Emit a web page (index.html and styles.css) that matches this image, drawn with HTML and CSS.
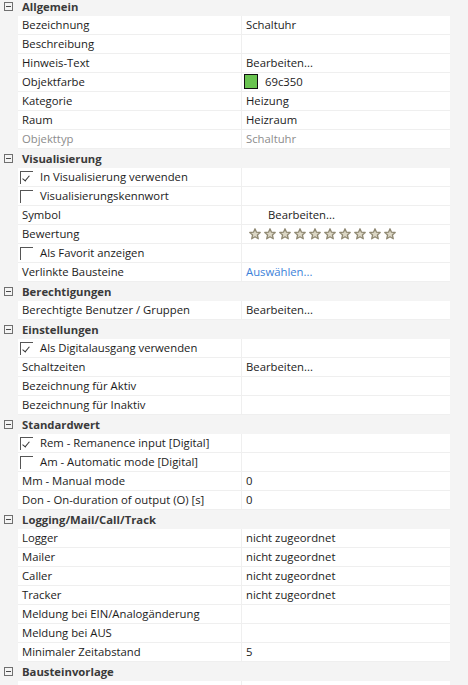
FILE: index.html
```html
<!DOCTYPE html>
<html lang="de">
<head>
<meta charset="utf-8">
<title>Eigenschaften</title>
<link rel="stylesheet" href="styles.css">
</head>
<body>
<div class="grid">
  <div class="group">
    <div class="head"><span class="toggle"></span><span class="title">Allgemein</span></div>
    <div class="row"><div class="label">Bezeichnung</div><div class="value">Schaltuhr</div></div>
    <div class="row"><div class="label">Beschreibung</div><div class="value"></div></div>
    <div class="row"><div class="label">Hinweis-Text</div><div class="value">Bearbeiten...</div></div>
    <div class="row"><div class="label">Objektfarbe</div><div class="value"><span class="swatch"></span>69c350</div></div>
    <div class="row"><div class="label">Kategorie</div><div class="value">Heizung</div></div>
    <div class="row"><div class="label">Raum</div><div class="value">Heizraum</div></div>
    <div class="row"><div class="label muted">Objekttyp</div><div class="value muted">Schaltuhr</div></div>
  </div>
  <div class="group">
    <div class="head"><span class="toggle"></span><span class="title">Visualisierung</span></div>
    <div class="row"><div class="label check"><span class="box checked"></span>In Visualisierung verwenden</div><div class="value"></div></div>
    <div class="row"><div class="label check"><span class="box"></span>Visualisierungskennwort</div><div class="value"></div></div>
    <div class="row"><div class="label">Symbol</div><div class="value indent">Bearbeiten...</div></div>
    <div class="row"><div class="label">Bewertung</div><div class="value stars" id="stars"></div></div>
    <div class="row"><div class="label check"><span class="box"></span>Als Favorit anzeigen</div><div class="value"></div></div>
    <div class="row"><div class="label">Verlinkte Bausteine</div><div class="value link">Auswählen...</div></div>
  </div>
  <div class="group">
    <div class="head"><span class="toggle"></span><span class="title">Berechtigungen</span></div>
    <div class="row"><div class="label">Berechtigte Benutzer / Gruppen</div><div class="value">Bearbeiten...</div></div>
  </div>
  <div class="group">
    <div class="head"><span class="toggle"></span><span class="title">Einstellungen</span></div>
    <div class="row"><div class="label check"><span class="box checked"></span>Als Digitalausgang verwenden</div><div class="value"></div></div>
    <div class="row"><div class="label">Schaltzeiten</div><div class="value">Bearbeiten...</div></div>
    <div class="row"><div class="label">Bezeichnung für Aktiv</div><div class="value"></div></div>
    <div class="row"><div class="label">Bezeichnung für Inaktiv</div><div class="value"></div></div>
  </div>
  <div class="group">
    <div class="head"><span class="toggle"></span><span class="title">Standardwert</span></div>
    <div class="row"><div class="label check"><span class="box checked"></span>Rem - Remanence input [Digital]</div><div class="value"></div></div>
    <div class="row"><div class="label check"><span class="box"></span>Am - Automatic mode [Digital]</div><div class="value"></div></div>
    <div class="row"><div class="label">Mm - Manual mode</div><div class="value">0</div></div>
    <div class="row"><div class="label">Don - On-duration of output (O) [s]</div><div class="value">0</div></div>
  </div>
  <div class="group">
    <div class="head"><span class="toggle"></span><span class="title">Logging/Mail/Call/Track</span></div>
    <div class="row"><div class="label">Logger</div><div class="value">nicht zugeordnet</div></div>
    <div class="row"><div class="label">Mailer</div><div class="value">nicht zugeordnet</div></div>
    <div class="row"><div class="label">Caller</div><div class="value">nicht zugeordnet</div></div>
    <div class="row"><div class="label">Tracker</div><div class="value">nicht zugeordnet</div></div>
    <div class="row"><div class="label">Meldung bei EIN/Analogänderung</div><div class="value"></div></div>
    <div class="row"><div class="label">Meldung bei AUS</div><div class="value"></div></div>
    <div class="row"><div class="label">Minimaler Zeitabstand</div><div class="value">5</div></div>
  </div>
  <div class="group">
    <div class="head"><span class="toggle"></span><span class="title">Bausteinvorlage</span></div>
    <div class="row"><div class="label"></div><div class="value"></div></div>
  </div>
</div>
<script>
  var s = document.getElementById('stars');
  var svg = '<svg class="star" viewBox="0 0 12 12" width="12" height="12"><path d="M6 0.8 L7.5 4.2 L11.2 4.5 L8.4 7 L9.3 10.8 L6 8.8 L2.7 10.8 L3.6 7 L0.8 4.5 L4.5 4.2 Z" fill="#dcd7c6" stroke="#8f8872" stroke-width="1.3" stroke-linejoin="round"/></svg>';
  var h = '';
  for (var i = 0; i < 10; i++) h += svg;
  s.innerHTML = h;
</script>
</body>
</html>
```

FILE: styles.css
```css
html, body {
  margin: 0;
  padding: 0;
  background: #f4f4f4;
}
body {
  font-family: "Open Sans", "Noto Sans", sans-serif;
  font-size: 11.3px;
  color: #1b1b1b;
  overflow: hidden;
}
.grid {
  margin-top: -3px;
  width: 468px;
}
.head {
  height: 19px;
  display: flex;
  align-items: center;
}
.toggle {
  width: 7px;
  height: 7px;
  border: 1px solid #6f6f6f;
  margin-left: 4px;
  margin-right: 9px;
  position: relative;
  flex: none;
}
.toggle::after {
  content: "";
  position: absolute;
  left: 1px;
  right: 1px;
  top: 3px;
  height: 1px;
  background: #4a4a4a;
}
.title {
  font-weight: 700;
  color: #3a3a3a;
}
.row {
  margin-left: 18px;
  width: 432px;
  height: 18px;
  border-bottom: 1px solid #efefef;
  background: #fff;
  display: grid;
  grid-template-columns: 224px 208px;
}
.label {
  padding-left: 4px;
  padding-bottom: 1px;
  border-right: 1px solid #efefef;
  display: flex;
  align-items: center;
  white-space: nowrap;
  overflow: hidden;
}
.value {
  padding-left: 4px;
  padding-bottom: 1px;
  display: flex;
  align-items: center;
  white-space: nowrap;
}
.muted {
  color: #8c8c8c;
}
.indent {
  padding-left: 26px;
}
.link {
  color: #3b7fd9;
}
.check {
  padding-left: 2px;
}
.box {
  width: 13px;
  height: 13px;
  border-left: 1px solid #555;
  border-top: 1px solid #555;
  box-sizing: border-box;
  margin-right: 7px;
  position: relative;
  flex: none;
  margin-top: 1px;
}
.box.checked::after {
  content: "";
  position: absolute;
  left: 3px;
  top: 2px;
  width: 3px;
  height: 6px;
  border-right: 1px solid #333;
  border-bottom: 1px solid #333;
  transform: rotate(40deg);
}
.swatch {
  width: 14px;
  height: 15px;
  box-sizing: border-box;
  background: #69c350;
  border: 1px solid #111;
  margin-left: -2px;
  margin-right: 7px;
}
.stars {
  padding-left: 7px;
  gap: 3px;
}
.star {
  display: block;
  flex: none;
}
```
